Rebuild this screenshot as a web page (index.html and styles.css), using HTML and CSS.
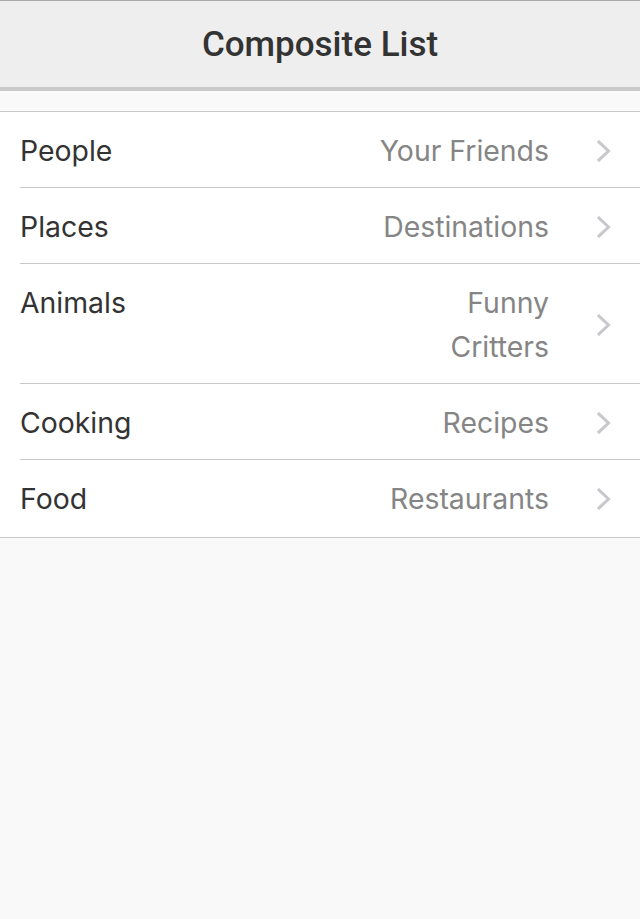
FILE: index.html
```html
<!DOCTYPE html>
<html>
<head>
<meta charset="utf-8">
<link rel="stylesheet" href="styles.css">
</head>
<body>
<header class="navbar"><h1 class="title">Composite List</h1></header>
<main class="content">
  <ul class="list">
    <li class="row"><div class="cell"><span class="label">People</span><span class="detail">Your Friends</span><svg class="chev" viewBox="0 0 14 22"><path d="M2 2 L11.5 11 L2 20" /></svg></div></li>
    <li class="row"><div class="cell"><span class="label">Places</span><span class="detail">Destinations</span><svg class="chev" viewBox="0 0 14 22"><path d="M2 2 L11.5 11 L2 20" /></svg></div></li>
    <li class="row"><div class="cell"><span class="label">Animals</span><span class="detail">Funny Critters</span><svg class="chev" viewBox="0 0 14 22"><path d="M2 2 L11.5 11 L2 20" /></svg></div></li>
    <li class="row"><div class="cell"><span class="label">Cooking</span><span class="detail">Recipes</span><svg class="chev" viewBox="0 0 14 22"><path d="M2 2 L11.5 11 L2 20" /></svg></div></li>
    <li class="row"><div class="cell last"><span class="label">Food</span><span class="detail">Restaurants</span><svg class="chev" viewBox="0 0 14 22"><path d="M2 2 L11.5 11 L2 20" /></svg></div></li>
  </ul>
</main>
</body>
</html>
```
FILE: styles.css
```css
html, body {
  margin: 0;
  padding: 0;
  background: #f9f9f9;
  height: 100%;
}
body {
  font-family: Inter, "Noto Sans", "DejaVu Sans", sans-serif;
}
.navbar {
  background: #eeeeee;
  border-top: 1px solid #a9a9a9;
  border-bottom: 4px solid #c9c9c9;
  height: 86px;
  display: flex;
  align-items: center;
  justify-content: center;
}
.title {
  margin: 0;
  font-family: Roboto, "Liberation Sans", sans-serif;
  font-weight: 500;
  font-size: 35px;
  color: #333333;
}
.content {
  padding-top: 20px;
}
.list {
  list-style: none;
  margin: 0;
  padding: 0 0 0 20px;
  background: #ffffff;
  border-top: 1px solid #c8c8c8;
  border-bottom: 1px solid #c8c8c8;
}
.cell {
  display: flex;
  align-items: flex-start;
  padding: 17px 29px 14px 0;
  border-bottom: 1px solid #c8c8c8;
  line-height: 44px;
  font-size: 28.4px;
}
.cell.last {
  border-bottom: none;
  padding-bottom: 16px;
}
.label {
  flex: 1;
  color: #333333;
}
.detail {
  color: #858585;
  max-width: 180px;
  text-align: right;
}
.chev {
  width: 14px;
  height: 22px;
  margin-left: 48px;
  align-self: center;
  fill: none;
  stroke: #c7c7cc;
  stroke-width: 3;
  stroke-linecap: square;
}
```
